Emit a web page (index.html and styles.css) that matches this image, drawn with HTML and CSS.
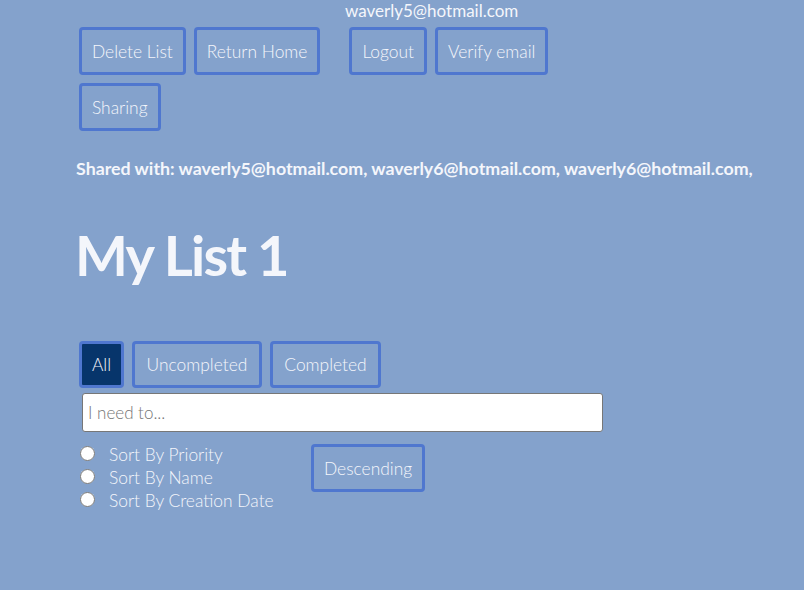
FILE: index.html
```html
<!DOCTYPE html>
<html>
<head>
<meta charset="utf-8">
<link rel="stylesheet" href="styles.css">
</head>
<body>
<div class="page">
  <div class="user">waverly5@hotmail.com</div>
  <div class="toolbar">
    <button class="btn">Delete List</button>
    <button class="btn">Return Home</button>
    <div class="spacer"></div>
    <button class="btn">Logout</button>
    <button class="btn">Verify email</button>
  </div>
  <div class="toolbar">
    <button class="btn">Sharing</button>
  </div>
  <p class="shared">Shared with: waverly5@hotmail.com, waverly6@hotmail.com, waverly6@hotmail.com,</p>
  <h1 class="title">My List 1</h1>
  <div class="filters">
    <button class="btn active">All</button>
    <button class="btn">Uncompleted</button>
    <button class="btn">Completed</button>
  </div>
  <input class="todo-input" type="text" placeholder="I need to...">
  <div class="sort-row">
    <div class="sorts">
      <label class="sort"><input type="radio" name="sort"><span>Sort By Priority</span></label>
      <label class="sort"><input type="radio" name="sort"><span>Sort By Name</span></label>
      <label class="sort"><input type="radio" name="sort"><span>Sort By Creation Date</span></label>
    </div>
    <button class="btn">Descending</button>
  </div>
</div>
</body>
</html>
```
FILE: styles.css
```css
html, body {
  margin: 0;
  padding: 0;
  background: #84a2cc;
  height: 100%;
}
body {
  font-family: Lato, "Open Sans", sans-serif;
  color: #f4f6fb;
}
.page {
  padding-left: 75px;
}
.user {
  padding-left: 270px;
  font-size: 17px;
  line-height: 22px;
  height: 23px;
}
.toolbar {
  display: flex;
  align-items: center;
}
.spacer {
  width: 21px;
}
.btn {
  font-family: Lato, "Open Sans", sans-serif;
  font-size: 17.4px;
  font-weight: 300;
  color: #f4f6fb;
  background: transparent;
  border: 3px solid #4f77cf;
  border-radius: 4px;
  height: 48px;
  padding: 0 10px;
  margin: 4px;
  cursor: pointer;
}
.btn.wide {
  padding: 0 11.5px;
}
.btn.active {
  background: #07356b;
}
.shared {
  margin: 22px 0 0 1px;
  font-size: 17.8px;
  font-weight: 700;
  line-height: 22px;
}
.title {
  margin: 43px 0 0 0;
  font-size: 56px;
  font-weight: 700;
  letter-spacing: -1.8px;
  line-height: 66px;
}
.filters {
  display: flex;
  margin-top: 49px;
}
.filters .btn {
  height: 47px;
  padding: 0 11.5px;
}
.filters .btn.active {
  padding: 0 10px;
}
.todo-input {
  display: block;
  margin: 1px 0 0 7px;
  width: 521px;
  height: 39px;
  box-sizing: border-box;
  border: 1px solid #777;
  border-radius: 3px;
  background: #fff;
  padding: 0 5px;
  font-family: Lato, "Open Sans", sans-serif;
  font-size: 17px;
  font-weight: 300;
  color: #333;
}
.todo-input::placeholder {
  color: #757575;
}
.sort-row {
  display: flex;
  align-items: flex-start;
  margin-top: 8px;
}
.sorts {
  display: flex;
  flex-direction: column;
  width: 232px;
  margin-top: 3px;
}
.sort {
  display: flex;
  align-items: center;
  height: 23px;
  font-size: 17.4px;
  font-weight: 300;
}
.sort input {
  margin: -3px 14px 0 5px;
  width: 15px;
  height: 15px;
}
```
